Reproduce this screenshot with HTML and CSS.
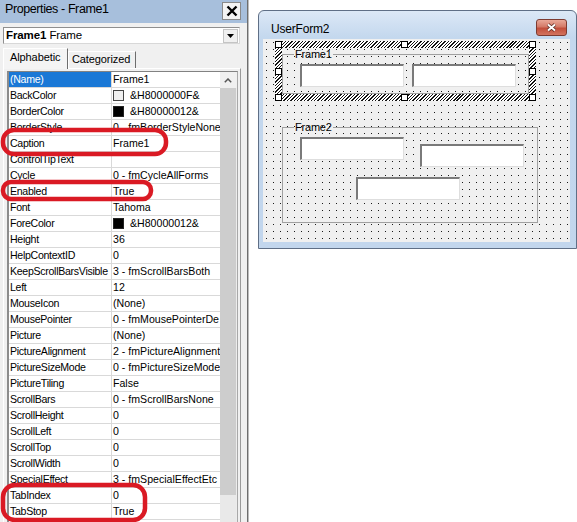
FILE: index.html
```html
<!DOCTYPE html>
<html>
<head>
<meta charset="utf-8">
<title>Properties - Frame1</title>
<link rel="stylesheet" href="styles.css">
</head>
<body>
<div class="app">
  <div class="props">
    <div class="ptitle">
      <span class="ptitle-text">Properties - Frame1</span>
      <div class="pclose"><svg width="12" height="12" viewBox="0 0 12 12"><path d="M1.5 1.5 L10.5 10.5 M10.5 1.5 L1.5 10.5" stroke="#000" stroke-width="2.4" fill="none"/></svg></div>
    </div>
    <div class="objrow">
      <div class="combo">
        <span class="combo-text"><b>Frame1</b> Frame</span>
        <span class="ddbtn"><svg width="7" height="4" viewBox="0 0 7 4"><path d="M0 0H7L3.5 4Z" fill="#000"/></svg></span>
      </div>
    </div>
    <div class="tabs">
      <div class="tab tab-active">Alphabetic</div>
      <div class="tab">Categorized</div>
    </div>
    <div class="page">
      <div class="grid">
        <div class="rows">
          <div class="row"><div class="pn sel">(Name)</div><div class="pv">Frame1</div></div>
          <div class="row"><div class="pn">BackColor</div><div class="pv"><span class="sw sw-w"></span>&amp;H8000000F&amp;</div></div>
          <div class="row"><div class="pn">BorderColor</div><div class="pv"><span class="sw sw-k"></span>&amp;H80000012&amp;</div></div>
          <div class="row"><div class="pn">BorderStyle</div><div class="pv">0 - fmBorderStyleNone</div></div>
          <div class="row"><div class="pn">Caption</div><div class="pv">Frame1</div></div>
          <div class="row"><div class="pn">ControlTipText</div><div class="pv"></div></div>
          <div class="row"><div class="pn">Cycle</div><div class="pv">0 - fmCycleAllForms</div></div>
          <div class="row"><div class="pn">Enabled</div><div class="pv">True</div></div>
          <div class="row"><div class="pn">Font</div><div class="pv">Tahoma</div></div>
          <div class="row"><div class="pn">ForeColor</div><div class="pv"><span class="sw sw-k"></span>&amp;H80000012&amp;</div></div>
          <div class="row"><div class="pn">Height</div><div class="pv">36</div></div>
          <div class="row"><div class="pn">HelpContextID</div><div class="pv">0</div></div>
          <div class="row"><div class="pn">KeepScrollBarsVisible</div><div class="pv">3 - fmScrollBarsBoth</div></div>
          <div class="row"><div class="pn">Left</div><div class="pv">12</div></div>
          <div class="row"><div class="pn">MouseIcon</div><div class="pv">(None)</div></div>
          <div class="row"><div class="pn">MousePointer</div><div class="pv">0 - fmMousePointerDe</div></div>
          <div class="row"><div class="pn">Picture</div><div class="pv">(None)</div></div>
          <div class="row"><div class="pn">PictureAlignment</div><div class="pv">2 - fmPictureAlignment</div></div>
          <div class="row"><div class="pn">PictureSizeMode</div><div class="pv">0 - fmPictureSizeMode</div></div>
          <div class="row"><div class="pn">PictureTiling</div><div class="pv">False</div></div>
          <div class="row"><div class="pn">ScrollBars</div><div class="pv">0 - fmScrollBarsNone</div></div>
          <div class="row"><div class="pn">ScrollHeight</div><div class="pv">0</div></div>
          <div class="row"><div class="pn">ScrollLeft</div><div class="pv">0</div></div>
          <div class="row"><div class="pn">ScrollTop</div><div class="pv">0</div></div>
          <div class="row"><div class="pn">ScrollWidth</div><div class="pv">0</div></div>
          <div class="row"><div class="pn">SpecialEffect</div><div class="pv">3 - fmSpecialEffectEtc</div></div>
          <div class="row"><div class="pn">TabIndex</div><div class="pv">0</div></div>
          <div class="row"><div class="pn">TabStop</div><div class="pv">True</div></div>
        </div>
        <div class="vscroll">
          <div class="sup"><svg width="8" height="5" viewBox="0 0 8 5"><path d="M0.8 4.2 L4 1 L7.2 4.2" stroke="#555" stroke-width="1.5" fill="none"/></svg></div>
          <div class="sthumb"></div>
          <div class="strack"></div>
        </div>
      </div>
    </div>
    <svg class="marks" width="247" height="522" viewBox="0 0 247 522">
      <rect x="3" y="130" width="163" height="24" rx="11" ry="11"/>
      <rect x="3" y="182" width="148" height="17" rx="8" ry="8"/>
      <rect x="3" y="485" width="142" height="35" rx="12" ry="12"/>
    </svg>
  </div>
  <div class="splitter"></div>
  <div class="designer">
    <div class="uf">
      <div class="uf-title">
        <span class="uf-caption">UserForm2</span>
        <div class="uf-close"><svg width="11" height="9" viewBox="0 0 11 9"><path d="M2 1.5 L9 7.5 M9 1.5 L2 7.5" stroke="#5a2a22" stroke-width="3.6" fill="none"/><path d="M2 1.5 L9 7.5 M9 1.5 L2 7.5" stroke="#fff" stroke-width="2" fill="none"/></svg></div>
      </div>
      <div class="uf-client dots">
        <div class="selbox">
          <div class="selin dots">
            <fieldset class="frame f1">
              <legend>Frame1</legend>
              <div class="fbody f1row">
                <div class="tb"></div>
                <div class="tb"></div>
              </div>
            </fieldset>
          </div>
          <span class="handle h1"></span>
          <span class="handle h2"></span>
          <span class="handle h3"></span>
          <span class="handle h4"></span>
          <span class="handle h5"></span>
          <span class="handle h6"></span>
          <span class="handle h7"></span>
          <span class="handle h8"></span>
        </div>
        <fieldset class="frame f2">
          <legend>Frame2</legend>
          <div class="fbody">
            <div class="f2row">
              <div class="tb"></div>
              <div class="tb tb-b"></div>
            </div>
            <div class="tb tb-c"></div>
          </div>
        </fieldset>
      </div>
    </div>
  </div>
</div>
</body>
</html>
```
FILE: styles.css
```css
* { box-sizing: border-box; }
html, body { margin: 0; padding: 0; }
body {
  width: 577px;
  height: 522px;
  overflow: hidden;
  background: #fff;
  color: #000;
  font-family: "Liberation Sans", Arial, sans-serif;
  font-size: 11px;
}
.app { display: flex; height: 522px; }

/* ---------- Properties panel ---------- */
.props {
  position: relative;
  width: 247px;
  flex: none;
  background: #f0f0f0;
  display: flex;
  flex-direction: column;
}
.ptitle {
  height: 23px;
  flex: none;
  background: #a7bfdc;
  display: flex;
  align-items: flex-start;
  justify-content: space-between;
  padding: 0 6px 0 5px;
}
.ptitle-text {
  font-size: 12.5px;
  line-height: 14px;
  letter-spacing: -0.4px;
  margin-top: 2px;
}
.pclose {
  width: 19px;
  height: 18px;
  margin-top: 2px;
  background: #f3f3f3;
  border: 1px solid #8a8a8a;
  display: flex;
  align-items: center;
  justify-content: center;
}
.objrow {
  height: 25px;
  flex: none;
  padding: 4px 0 0 3px;
}
.combo {
  width: 237px;
  height: 17px;
  background: #fff;
  border-top: 1px solid #8f8f8f;
  border-left: 1px solid #8f8f8f;
  border-right: 1px solid #d8d8d8;
  border-bottom: 1px solid #d8d8d8;
  display: flex;
  align-items: center;
  justify-content: space-between;
  padding-left: 2px;
  font-size: 11.5px;
  letter-spacing: -0.1px;
}
.combo-text { line-height: 15px; }
.ddbtn {
  width: 15px;
  height: 14px;
  margin-right: 1px;
  background: #f0f0f0;
  border: 1px solid #c4c4c4;
  display: flex;
  align-items: center;
  justify-content: center;
}
.tabs {
  height: 20px;
  flex: none;
  display: flex;
  align-items: flex-end;
  padding-left: 3px;
}
.tab {
  height: 17px;
  padding-left: 3px;
  border-top: 1px solid #fff;
  border-left: 1px solid #fff;
  border-right: 1px solid #6d6d6d;
  background: #f0f0f0;
  line-height: 15px;
  font-size: 11px;
  letter-spacing: -0.1px;
  width: 68px;
}
.tab-active {
  position: relative;
  z-index: 1;
  height: 21px;
  width: 65px;
  margin-bottom: -1px;
  padding-left: 6px;
  padding-top: 1px;
  background: #f4f4f4;
}
.page {
  flex: 1;
  min-height: 0;
  width: 238px;
  margin-left: 3px;
  border-top: 1px solid #fff;
  border-left: 1px solid #fff;
  border-right: 1px solid #9a9a9a;
  padding: 2px 2px 0 3px;
}
.grid {
  height: 100%;
  display: flex;
  background: #fff;
  border-top: 1px solid #828282;
  border-left: 2px solid #8c8c8c;
  border-right: 1px solid #a8a8a8;
  overflow: hidden;
}
.rows { width: 211px; flex: none; }
.row {
  height: 16px;
  display: flex;
  border-bottom: 1px solid #d9d9d9;
}
.pn, .pv {
  display: flex;
  align-items: center;
  white-space: nowrap;
  overflow: hidden;
  line-height: 15px;
  font-size: 10.6px;
}
.pn {
  width: 103px;
  padding-left: 1px;
  border-right: 1px solid #d9d9d9;
  letter-spacing: -0.3px;
}
.pn.sel { background: #1a78d6; color: #fff; }
.pv { width: 108px; padding-left: 1px; letter-spacing: 0; }
.sw {
  width: 11px;
  height: 11px;
  flex: none;
  margin-right: 6px;
  border: 1px solid #444;
}
.sw-w { background: #f0f0f0; }
.sw-k { background: #000; border-color: #222; }
.vscroll {
  width: 17px;
  flex: none;
  display: flex;
  flex-direction: column;
  background: #ececec;
}
.sup {
  height: 16px;
  flex: none;
  background: #f0f0f0;
  display: flex;
  align-items: center;
  justify-content: center;
  padding-right: 1px;
}
.sthumb {
  height: 407px;
  flex: none;
  margin-right: 1px;
  background: #cdcdcd;
}
.strack { flex: 1; margin-right: 1px; background: #e9e9e9; }
.marks {
  position: absolute;
  left: 0;
  top: 0;
  pointer-events: none;
  overflow: visible;
}
.marks rect { fill: none; stroke: #da1a24; stroke-width: 4.5; }

.splitter {
  width: 2px;
  flex: none;
  border-left: 1px solid #6e6e6e;
  background: #bdbdbd;
}

/* ---------- Designer ---------- */
.designer {
  flex: 1;
  background: #fff;
  padding: 10px 0 0 9px;
}
.uf {
  width: 319px;
  height: 239px;
  border: 1px solid #5f6f86;
  border-radius: 6px 6px 0 0;
  background: linear-gradient(180deg, #dce8f6 0px, #c4d8ee 26px, #c2d6ed 100%);
  padding: 0 6px 6px 4px;
  display: flex;
  flex-direction: column;
}
.uf-title {
  height: 28px;
  flex: none;
  display: flex;
  align-items: flex-start;
  justify-content: space-between;
  padding-left: 8px;
}
.uf-caption {
  font-size: 12px;
  line-height: 14px;
  letter-spacing: -0.2px;
  margin-top: 11px;
  color: #000;
}
.uf-close {
  width: 31px;
  height: 17px;
  margin-top: 8px;
  margin-right: 3px;
  border: 1px solid #7d3b31;
  border-radius: 3px;
  background: linear-gradient(180deg, #e9a898 0%, #d47a68 45%, #c24e3b 55%, #d3735e 100%);
  display: flex;
  align-items: center;
  justify-content: center;
}
.uf-client {
  flex: 1;
  padding: 2px 0 0 12px;
}
.dots {
  background-color: #1a1a1a;
  background-image:
    linear-gradient(to right, transparent 1px, #f0f0f0 1px),
    linear-gradient(to bottom, transparent 1px, #f0f0f0 1px);
  background-size: 7px 7px;
  background-position: 0px 0px;
  background-attachment: fixed;
}
.selbox {
  position: relative;
  width: 261px;
  height: 60px;
  padding: 7px;
  background: repeating-linear-gradient(135deg, #111 0px, #111 1px, #fff 1px, #fff 2.4px);
}
.selin { width: 247px; height: 46px; }
.frame {
  margin: 0;
  padding: 0;
  min-width: 0;
  border: 1px solid #a0a0a0;
}
.frame legend {
  padding: 0 1px;
  margin-left: 11px;
  font-size: 11px;
  line-height: 12px;
  letter-spacing: -0.2px;
}
.f1 { width: 247px; height: 46px; }
.f2 { width: 256px; height: 102px; margin: 20px 0 0 7px; }
.fbody { padding: 4px 0 0 17px; }
.f1row { display: flex; gap: 8px; }
.f2row { display: flex; align-items: flex-start; }
.tb {
  width: 104px;
  height: 23px;
  flex: none;
  background: #fff;
  border-top: 2px solid #7a7a7a;
  border-left: 2px solid #7a7a7a;
  border-right: 1px solid #dedede;
  border-bottom: 1px solid #dedede;
}
.tb-b { margin: 7px 0 0 16px; }
.tb-c { margin: 10px 0 0 56px; }
.handle {
  position: absolute;
  width: 7px;
  height: 7px;
  background: #fff;
  border: 1px solid #000;
}
.h1 { left: 0; top: 0; }
.h2 { left: 126px; top: 0; }
.h3 { left: 254px; top: 0; }
.h4 { left: 0; top: 27px; }
.h5 { left: 254px; top: 27px; }
.h6 { left: 0; top: 53px; }
.h7 { left: 126px; top: 53px; }
.h8 { left: 254px; top: 53px; }
```
